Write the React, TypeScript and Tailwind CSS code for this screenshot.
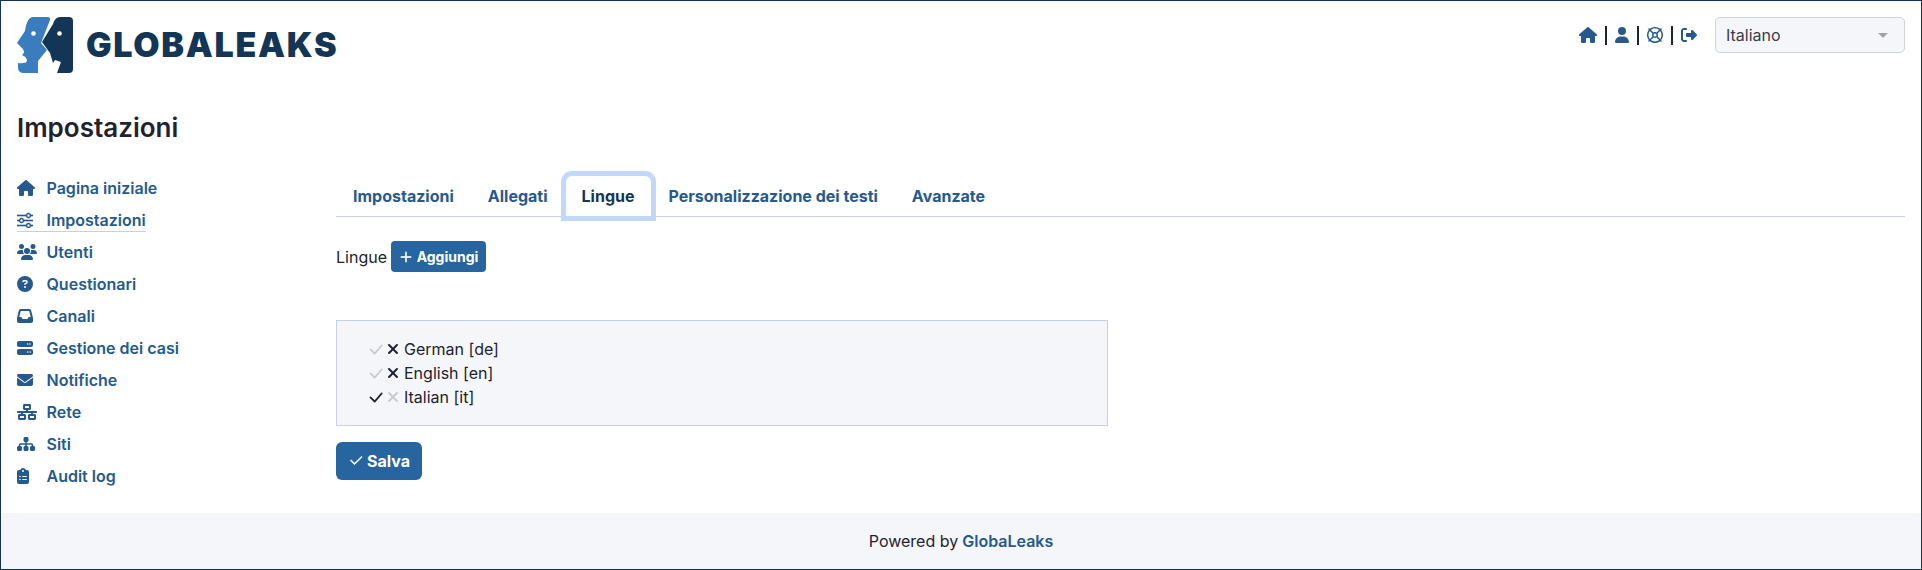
import React from "react";
import { BsCheck2, BsCheckLg, BsPlusLg, BsSliders } from "react-icons/bs";
import {
  FaCircleQuestion,
  FaClipboardList,
  FaEnvelope,
  FaHouse,
  FaInbox,
  FaNetworkWired,
  FaRegLifeRing,
  FaRightFromBracket,
  FaServer,
  FaSitemap,
  FaUser,
  FaUsers,
  FaXmark,
} from "react-icons/fa6";

const navItems = [
  { label: "Pagina iniziale", icon: <FaHouse className="h-[16px] w-[18px]" /> },
  { label: "Impostazioni", icon: <BsSliders className="h-[16px] w-[16px]" strokeWidth={0.6} />, active: true },
  { label: "Utenti", icon: <FaUsers className="h-[16px] w-[20px]" /> },
  { label: "Questionari", icon: <FaCircleQuestion className="h-[16px] w-[16px]" /> },
  { label: "Canali", icon: <FaInbox className="h-[16px] w-[16px]" /> },
  { label: "Gestione dei casi", icon: <FaServer className="h-[16px] w-[16px]" /> },
  { label: "Notifiche", icon: <FaEnvelope className="h-[16px] w-[16px]" /> },
  { label: "Rete", icon: <FaNetworkWired className="h-[16px] w-[20px]" /> },
  { label: "Siti", icon: <FaSitemap className="h-[16px] w-[18px]" /> },
  { label: "Audit log", icon: <FaClipboardList className="h-[16px] w-[12px]" /> },
];

const tabs = ["Impostazioni", "Allegati", "Lingue", "Personalizzazione dei testi", "Avanzate"];

const languages = [
  { name: "German [de]", isDefault: false },
  { name: "English [en]", isDefault: false },
  { name: "Italian [it]", isDefault: true },
];

const Logo = () => (
  <div className="flex items-center gap-[13px]">
    <svg width="56" height="56" viewBox="0 0 56 56">
      {/* left face */}
      <path
        fill="#3a7dbf"
        d="M16 0H30Q34 0 33 3L24 26L30 33L21 44V56H7Q1 56 1 50V46Q9 47 10 44Q10 40 5 38Q9 35 5 31L0 26L8 14Q10 0 16 0Z"
      />
      <circle cx="16.5" cy="16.5" r="2.3" fill="#ffffff" />
      {/* right face */}
      <path
        fill="#133657"
        d="M43 0H52Q56 0 56 4V52Q56 56 52 56H40L44 45L38 43L36 46L33 36L25 25L36 7Q38 0 43 0Z"
      />
      <circle cx="42.5" cy="16.5" r="2.3" fill="#ffffff" />
    </svg>
    <span className="font-black text-[34px] leading-none tracking-[1.7px] text-[#133657]">GLOBALEAKS</span>
  </div>
);

const Divider = () => <span className="w-[2px] h-[19px] bg-[#1f2230]" />;

const App = () => {
  return (
    <div className="w-[1922px] h-[570px] flex flex-col border border-[#133657] bg-white font-['Inter',sans-serif] text-[16px] text-[#1f2230] overflow-hidden">
      {/* header */}
      <header className="flex justify-between items-start px-[16px] pt-[16px]">
        <Logo />
        <div className="flex items-center">
          <div className="flex items-center gap-[8px] text-[#26598e] mr-[18px]">
            <FaHouse className="h-[16px] w-[18px]" />
            <Divider />
            <FaUser className="h-[16px] w-[14px]" />
            <Divider />
            <FaRegLifeRing className="h-[16px] w-[16px]" />
            <Divider />
            <FaRightFromBracket className="h-[16px] w-[16px]" />
          </div>
          <div className="w-[190px] h-[36px] flex items-center justify-between pl-[10px] pr-[16px] rounded-[5px] border border-[#ced4da] bg-[#f5f6fa] text-[#3a3d48]">
            <span>Italiano</span>
            <span className="w-0 h-0 border-x-[5px] border-x-transparent border-t-[5px] border-t-[#a0a3a8]" />
          </div>
        </div>
      </header>

      <h1 className="pl-[16px] mt-[39px] text-[26px] leading-[31px] font-semibold">Impostazioni</h1>

      <div className="flex flex-1 mt-[29px]">
        {/* sidebar */}
        <nav className="w-[335px] pl-[16px] flex flex-col">
          {navItems.map((item) => (
            <div key={item.label} className="h-[32px] flex items-center font-semibold text-[#26598e]">
              <span className={`flex items-center h-[24px] ${item.active ? "border-b border-[#c7d0e3]" : ""}`}>
                <span className="w-[29.5px] shrink-0 flex">{item.icon}</span>
                {item.label}
              </span>
            </div>
          ))}
        </nav>

        {/* main */}
        <main className="flex-1 pr-[16px] pt-[4px]">
          <div className="flex h-[41px] border-b border-[#c7d0e3]">
            {tabs.map((tab) =>
              tab === "Lingue" ? (
                <div
                  key={tab}
                  className="relative px-[16px] ml-[1px] mr-[1px] flex items-center font-bold text-[#133657] bg-white rounded-t-[6px] shadow-[0_0_0_5px_#c2d8fb]"
                >
                  {tab}
                </div>
              ) : (
                <div key={tab} className="px-[17px] flex items-center font-bold text-[#26598e]">
                  {tab}
                </div>
              )
            )}
          </div>

          <div className="flex items-center gap-[4px] mt-[24px]">
            <span>Lingue</span>
            <button className="h-[31px] w-[95px] flex items-center justify-center gap-[4px] rounded-[4px] bg-[#2765a1] text-white text-[14px] font-bold">
              <BsPlusLg className="text-[14px]" strokeWidth={0.8} />
              Aggiungi
            </button>
          </div>

          <div className="w-[772px] h-[106px] mt-[48px] pl-[29px] pt-[16px] border border-[#c7d0e3] bg-[#f5f6fa]">
            {languages.map((lang) => (
              <div key={lang.name} className="h-[24px] flex items-center">
                <BsCheckLg className={`text-[19px] ${lang.isDefault ? "text-[#1f2230]" : "text-[#c9cbd0]"}`} />
                <FaXmark
                  className={`ml-[2px] mr-[5px] h-[16px] w-[12px] ${lang.isDefault ? "text-[#c9cbd0]" : "text-[#1f2230]"}`}
                />
                {lang.name}
              </div>
            ))}
          </div>

          <button className="mt-[16px] w-[86px] h-[38px] flex items-center justify-center gap-[3px] rounded-[6px] bg-[#2765a1] text-white font-bold">
            <BsCheck2 className="text-[16px]" strokeWidth={0.8} />
            Salva
          </button>
        </main>
      </div>

      {/* footer */}
      <footer className="h-[56px] flex items-center justify-center gap-[4px] bg-[#f5f6fa]">
        Powered by <span className="font-semibold text-[#26598e]">GlobaLeaks</span>
      </footer>
    </div>
  );
};

export default App;
